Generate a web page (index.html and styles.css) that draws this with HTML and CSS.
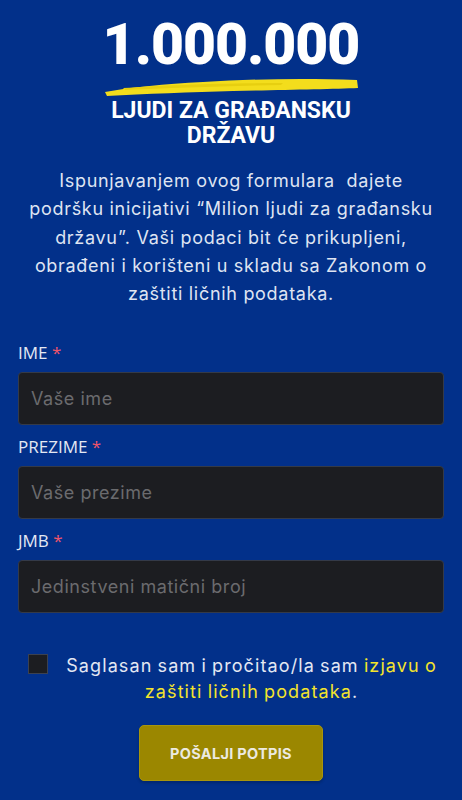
FILE: index.html
```html
<!DOCTYPE html>
<html lang="bs">
<head>
<meta charset="utf-8">
<title>1.000.000 ljudi za građansku državu</title>
<link rel="stylesheet" href="styles.css">
</head>
<body>
<main class="page">
  <header class="hero">
    <div class="big">1.000.000</div>
    <svg class="stroke" width="256" height="22" viewBox="0 0 256 22">
      <path d="M2 17 C30 12 60 9 100 7 C150 4 200 3 254 5 L255 13 C230 14 180 15 130 16 C90 17 40 19 4 21 Z" fill="#f3dd1c"/>
      <path d="M20 13 C60 10 120 8 180 8 L178 10 C120 11 70 13 22 15 Z" fill="#e7cf10"/>
    </svg>
    <h1 class="sub">LJUDI ZA GRAĐANSKU<br>DRŽAVU</h1>
  </header>
  <p class="intro">Ispunjavanjem ovog formulara&nbsp; dajete<br>podršku inicijativi “Milion ljudi za građansku<br>državu”. Vaši podaci bit će prikupljeni,<br>obrađeni i korišteni u skladu sa Zakonom o<br>zaštiti ličnih podataka.</p>
  <form class="form">
    <label class="field">
      <span class="label">IME <span class="req">*</span></span>
      <input class="input" type="text" placeholder="Vaše ime">
    </label>
    <label class="field">
      <span class="label">PREZIME <span class="req">*</span></span>
      <input class="input" type="text" placeholder="Vaše prezime">
    </label>
    <label class="field">
      <span class="label">JMB <span class="req">*</span></span>
      <input class="input" type="text" placeholder="Jedinstveni matični broj">
    </label>
    <div class="consent">
      <span class="box"></span>
      <span class="consent-text">Saglasan sam i pročitao/la sam <a class="link" href="#">izjavu o zaštiti ličnih podataka</a>.</span>
    </div>
    <div class="actions">
      <button class="btn" type="button">POŠALJI POTPIS</button>
    </div>
  </form>
</main>
</body>
</html>
```

FILE: styles.css
```css
html, body {
  margin: 0;
  padding: 0;
  background: #02308a;
}
body {
  font-family: Inter, "Open Sans", sans-serif;
  color: #e4e8f3;
}
.page {
  padding: 16px 18px 20px;
}
.hero {
  display: flex;
  flex-direction: column;
  align-items: center;
}
.big {
  font-family: Roboto, "Liberation Sans", sans-serif;
  font-weight: 900;
  font-size: 57px;
  line-height: 58px;
  color: #ffffff;
  letter-spacing: -1px;
}
.stroke {
  display: block;
  margin-top: 1px;
}
.sub {
  margin: 1px 0 0;
  font-family: Roboto, "Liberation Sans", sans-serif;
  font-weight: 700;
  font-size: 23px;
  line-height: 25px;
  color: #ffffff;
  text-align: center;
}
.intro {
  margin: 19px 0 0;
  font-size: 18px;
  line-height: 28.3px;
  letter-spacing: 0.7px;
  text-align: center;
  color: #dfe4f2;
  font-weight: 400;
  white-space: nowrap;
}
.form {
  margin-top: 33px;
  display: flex;
  flex-direction: column;
}
.field {
  display: flex;
  flex-direction: column;
  margin-bottom: 10px;
}
.label {
  font-family: "Open Sans", sans-serif;
  font-size: 17px;
  line-height: 24px;
  color: #e4e8f3;
  margin-bottom: 7px;
}
.req {
  color: #f0546a;
}
.input {
  box-sizing: border-box;
  height: 53px;
  width: 100%;
  background: #1c1d21;
  border: 1px solid #343a48;
  border-radius: 4px;
  padding: 0 12px;
  font-family: Inter, "Open Sans", sans-serif;
  font-weight: 400;
  font-size: 18px;
  letter-spacing: 0.55px;
  color: #e4e8f3;
  outline: none;
}
.input::placeholder {
  color: #6b6b6e;
}
.consent {
  display: flex;
  align-items: flex-start;
  gap: 11px;
  margin: 30px 0 0 10px;
}
.box {
  flex: none;
  width: 20px;
  height: 20px;
  margin-top: 1px;
  background: #1c1d21;
  border: 1px solid #3b4150;
  box-sizing: border-box;
}
.consent-text {
  font-size: 18px;
  line-height: 26px;
  letter-spacing: 1.1px;
  word-spacing: -1px;
  text-align: center;
  color: #e4e8f3;
  font-weight: 400;
}
.link {
  color: #f4e42c;
  text-decoration: none;
}
.actions {
  display: flex;
  justify-content: center;
  margin-top: 20px;
}
.btn {
  width: 184px;
  height: 56px;
  background: #9b8700;
  border: 1px solid #a8950c;
  border-radius: 5px;
  color: #eceae0;
  font-family: Inter, "Open Sans", sans-serif;
  font-weight: 700;
  font-size: 14.5px;
  letter-spacing: 0.3px;
  box-shadow: 0 2px 3px rgba(0,0,0,0.2);
}
```
